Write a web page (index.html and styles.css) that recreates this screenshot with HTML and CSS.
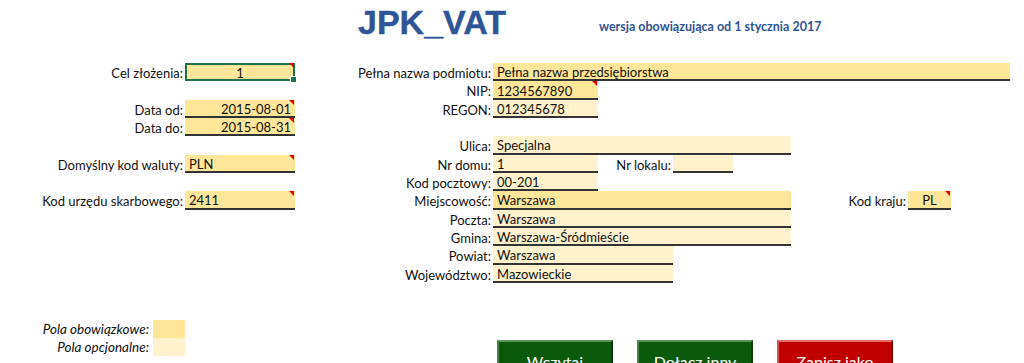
FILE: index.html
```html
<!DOCTYPE html>
<html lang="pl">
<head>
<meta charset="utf-8">
<title>JPK_VAT</title>
<link rel="stylesheet" href="styles.css">
</head>
<body>
<div class="header">
  <div class="title">JPK_VAT</div>
  <div class="subtitle">wersja obowiązująca od 1 stycznia 2017</div>
</div>
<div class="sheet">
  <!-- left column -->
  <div class="lbl c1 r0">Cel złożenia:</div>
  <div class="fld req c2 r0 center tri sel">1</div>
  <div class="lbl c1 r2">Data od:</div>
  <div class="fld req c2 r2 right tri">2015-08-01</div>
  <div class="lbl c1 r3">Data do:</div>
  <div class="fld req c2 r3 right tri">2015-08-31</div>
  <div class="lbl c1 r5">Domyślny kod waluty:</div>
  <div class="fld req c2 r5 tri">PLN</div>
  <div class="lbl c1 r7">Kod urzędu skarbowego:</div>
  <div class="fld req c2 r7 tri">2411</div>

  <!-- middle column -->
  <div class="lbl c3 r0">Pełna nazwa podmiotu:</div>
  <div class="fld req c4 w-full r0">Pełna nazwa przedsiębiorstwa</div>
  <div class="lbl c3 r1">NIP:</div>
  <div class="fld req c4 r1 tri">1234567890</div>
  <div class="lbl c3 r2">REGON:</div>
  <div class="fld opt c4 r2">012345678</div>

  <div class="lbl c3 r4">Ulica:</div>
  <div class="fld opt c4 w-long r4">Specjalna</div>
  <div class="lbl c3 r5">Nr domu:</div>
  <div class="fld opt c4 r5">1</div>
  <div class="lbl c5 r5">Nr lokalu:</div>
  <div class="fld opt c6 r5"></div>
  <div class="lbl c3 r6">Kod pocztowy:</div>
  <div class="fld opt c4 r6">00-201</div>
  <div class="lbl c3 r7">Miejscowość:</div>
  <div class="fld req c4 w-long r7">Warszawa</div>
  <div class="lbl c8 r7">Kod kraju:</div>
  <div class="fld req c9 r7 center tri">PL</div>
  <div class="lbl c3 r8">Poczta:</div>
  <div class="fld opt c4 w-long r8">Warszawa</div>
  <div class="lbl c3 r9">Gmina:</div>
  <div class="fld opt c4 w-long r9">Warszawa-Śródmieście</div>
  <div class="lbl c3 r10">Powiat:</div>
  <div class="fld opt c4 w-mid r10">Warszawa</div>
  <div class="lbl c3 r11">Województwo:</div>
  <div class="fld opt c4 w-mid r11">Mazowieckie</div>

  <!-- legend -->
  <div class="legend c1 r14">
    <span class="legend-text">Pola obowiązkowe:</span>
    <span class="swatch swatch-req"></span>
  </div>
  <div class="legend c1 r15">
    <span class="legend-text">Pola opcjonalne:</span>
    <span class="swatch swatch-opt"></span>
  </div>

  <!-- buttons -->
  <div class="buttons r15">
    <button class="btn btn-green">Wczytaj</button>
    <button class="btn btn-green">Dołącz inny</button>
    <button class="btn btn-red">Zapisz jako</button>
  </div>
</div>
</body>
</html>
```

FILE: styles.css
```css
html, body {
  margin: 0;
  padding: 0;
}

body {
  width: 1024px;
  height: 363px;
  overflow: hidden;
  background: #ffffff;
  color: #111111;
  font-family: Lato, "Liberation Sans", sans-serif;
  font-size: 13px;
}

.header {
  height: 63px;
  display: grid;
  grid-template-columns: 357px 242px auto;
  align-items: start;
}

.title {
  grid-column: 2;
  margin-top: 3px;
  margin-left: 1px;
  font-family: "Liberation Sans", Arial, sans-serif;
  font-weight: bold;
  font-size: 34px;
  line-height: 38px;
  color: #2f5597;
  -webkit-text-stroke: 0.4px #2f5597;
}

.subtitle {
  grid-column: 3;
  margin-top: 19px;
  font-weight: bold;
  font-size: 12.5px;
  line-height: 16px;
  color: #2f5496;
}

.sheet {
  display: grid;
  grid-template-columns: 185px 110px 198px 105px 75px 60px 58px 117px 43px 59px 1fr;
  grid-template-rows: repeat(16, 18.33px);
}

.c1 { grid-column: 1; }
.c2 { grid-column: 2; }
.c3 { grid-column: 3; }
.c4 { grid-column: 4; }
.c5 { grid-column: 5; }
.c6 { grid-column: 6; }
.c8 { grid-column: 8; }
.c9 { grid-column: 9; }
.w-full { grid-column: 4 / 11; }
.w-long { grid-column: 4 / 8; }
.w-mid { grid-column: 4 / 6; }

.r0 { grid-row: 1; }
.r1 { grid-row: 2; }
.r2 { grid-row: 3; }
.r3 { grid-row: 4; }
.r4 { grid-row: 5; }
.r5 { grid-row: 6; }
.r6 { grid-row: 7; }
.r7 { grid-row: 8; }
.r8 { grid-row: 9; }
.r9 { grid-row: 10; }
.r10 { grid-row: 11; }
.r11 { grid-row: 12; }
.r14 { grid-row: 15; }
.r15 { grid-row: 16; }

.lbl {
  display: flex;
  align-items: center;
  justify-content: flex-end;
  padding-right: 2px;
  padding-top: 2px;
  white-space: nowrap;
}

.fld {
  position: relative;
  display: flex;
  align-items: center;
  padding: 2px 4px 0 4px;
  border-bottom: 2px solid #333333;
  white-space: nowrap;
  box-sizing: border-box;
}

.req { background: #ffe699; }
.opt { background: #fff2cc; }

.center { justify-content: center; }
.right { justify-content: flex-end; }

.tri::after {
  content: "";
  position: absolute;
  top: 0;
  right: 1px;
  width: 0;
  height: 0;
  border-top: 5px solid #e00000;
  border-left: 5px solid transparent;
}

.sel {
  border-bottom: none;
  box-shadow: inset 0 0 0 2px #217346;
}

.sel::before {
  content: "";
  position: absolute;
  right: -2px;
  bottom: -2px;
  width: 5px;
  height: 5px;
  background: #217346;
  border: 1px solid #ffffff;
}

.legend {
  display: flex;
  justify-content: flex-end;
  align-items: stretch;
}

.legend-text {
  display: flex;
  align-items: center;
  font-style: italic;
  font-size: 13.5px;
  padding-right: 4px;
}

.swatch {
  width: 32px;
}

.swatch-req { background: #ffe699; }
.swatch-opt { background: #fff2cc; }

.buttons {
  grid-column: 4 / 11;
  display: flex;
  gap: 24px;
  padding-left: 4px;
  margin-top: 2px;
  align-self: start;
}

.btn {
  width: 116px;
  height: 36px;
  flex: none;
  box-sizing: border-box;
  padding: 0;
  padding-top: 8px;
  font-family: Lato, "Liberation Sans", sans-serif;
  font-size: 16px;
  color: #ffffff;
  border-width: 2px;
  border-style: solid;
}

.btn-green {
  background: #0b5a0b;
  border-color: #5a935a #063a06 #063a06 #4a844a;
}

.btn-red {
  background: #c00000;
  border-color: #e46a6a #7a0000 #7a0000 #d85050;
}
```
